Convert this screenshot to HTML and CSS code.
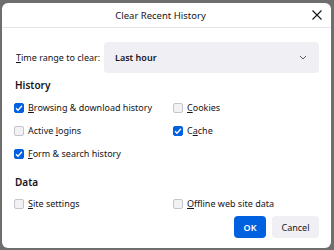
FILE: index.html
```html
<!DOCTYPE html>
<html lang="en">
<head>
    <meta charset="UTF-8">
    <title>Clear Recent History</title>
    <link rel="stylesheet" href="styles.css">
</head>
<body>
    <div class="dialog">
        <div class="dialog-header">
            <div class="dialog-title">Clear Recent History</div>
            <button class="close-btn" aria-label="Close">
                <svg width="10" height="10" viewBox="0 0 10 10"><path d="M0.5 0.5L9.5 9.5M9.5 0.5L0.5 9.5" stroke="#15141a" stroke-width="1.1" fill="none"/></svg>
            </button>
        </div>

        <div class="dialog-body">
            <div class="range-row">
                <span class="range-label"><u>T</u>ime range to clear:</span>
                <div class="select">
                    <span>Last hour</span>
                    <svg width="8" height="5" viewBox="0 0 8 5"><path d="M1 1L4 4L7 1" stroke="#5b5b66" stroke-width="1" fill="none"/></svg>
                </div>
            </div>

            <div class="section-title">History</div>
            <div class="options">
                <label class="option"><span class="box checked"></span><span><u>B</u>rowsing &amp; download history</span></label>
                <label class="option"><span class="box"></span><span><u>C</u>ookies</span></label>
                <label class="option"><span class="box"></span><span>Active <u>l</u>ogins</span></label>
                <label class="option"><span class="box checked"></span><span>C<u>a</u>che</span></label>
                <label class="option"><span class="box checked"></span><span><u>F</u>orm &amp; search history</span></label>
            </div>

            <div class="section-title data-title">Data</div>
            <div class="options data-options">
                <label class="option"><span class="box"></span><span><u>S</u>ite settings</span></label>
                <label class="option"><span class="box"></span><span><u>O</u>ffline web site data</span></label>
            </div>

            <div class="buttons">
                <button class="btn btn-primary">OK</button>
                <button class="btn btn-cancel">Cancel</button>
            </div>
        </div>
    </div>
</body>
</html>
```

FILE: styles.css
```css
* {
    box-sizing: border-box;
    margin: 0;
    padding: 0;
}

body {
    width: 334px;
    height: 250px;
    background-color: #6e6e6e;
    padding: 3px 3px 2px 2px;
    font-family: "Noto Sans", sans-serif;
    font-size: 9px;
    color: #15141a;
    overflow: hidden;
}

.dialog {
    height: 245px;
    background-color: #fff;
    border-radius: 6px;
    display: flex;
    flex-direction: column;
}

.dialog-header {
    height: 25px;
    display: flex;
    align-items: center;
    border-bottom: 1px solid #e3e3e8;
    padding: 0 6px 0 10px;
}

.dialog-title {
    flex: 1;
    text-align: center;
    font-size: 9.5px;
}

.close-btn {
    border: none;
    background: none;
    width: 16px;
    height: 16px;
    display: flex;
    align-items: center;
    justify-content: center;
}

.dialog-body {
    padding: 14px 12px 0 12px;
}

.range-row {
    display: flex;
    align-items: center;
}

.range-label {
    flex: none;
    padding-left: 2px;
}

.select {
    width: 215px;
    margin-left: auto;
    height: 31px;
    background-color: #f0f0f4;
    border-radius: 4px;
    display: flex;
    align-items: center;
    justify-content: space-between;
    padding: 0 12px 0 11px;
    font-weight: 600;
}

.section-title {
    font-size: 10px;
    font-weight: 600;
    margin-top: 4px;
    padding-left: 1px;
    line-height: 16px;
}

.data-title {
    margin-top: 12px;
}

.options {
    display: grid;
    grid-template-columns: 159px 1fr;
    row-gap: 7px;
    margin-top: 7px;
}

.data-options {
    margin-top: 6px;
}

.option {
    display: flex;
    align-items: center;
    gap: 4px;
    line-height: 16px;
}

.box {
    width: 10px;
    height: 10px;
    border: 1px solid #c4c4cc;
    background-color: #f2f2f4;
    border-radius: 2px;
}

.box.checked {
    border-color: #0061e0;
    background-color: #0061e0;
    background-image: url("data:image/svg+xml,%3Csvg xmlns='http://www.w3.org/2000/svg' viewBox='0 0 10 10'%3E%3Cpath d='M2 5.2L4 7.2L8 2.8' stroke='white' stroke-width='1.3' fill='none'/%3E%3C/svg%3E");
    background-size: 10px 10px;
    background-position: center;
}

.buttons {
    display: flex;
    justify-content: flex-end;
    gap: 6px;
    margin-top: 4px;
}

.btn {
    height: 22px;
    border: none;
    border-radius: 4px;
    background-color: #f0f0f4;
    color: #15141a;
    font-family: inherit;
    font-size: 9px;
}

.btn-primary {
    width: 32px;
    background-color: #0061e0;
    color: #fff;
    font-weight: 600;
}

.btn-cancel {
    width: 47px;
}
```
